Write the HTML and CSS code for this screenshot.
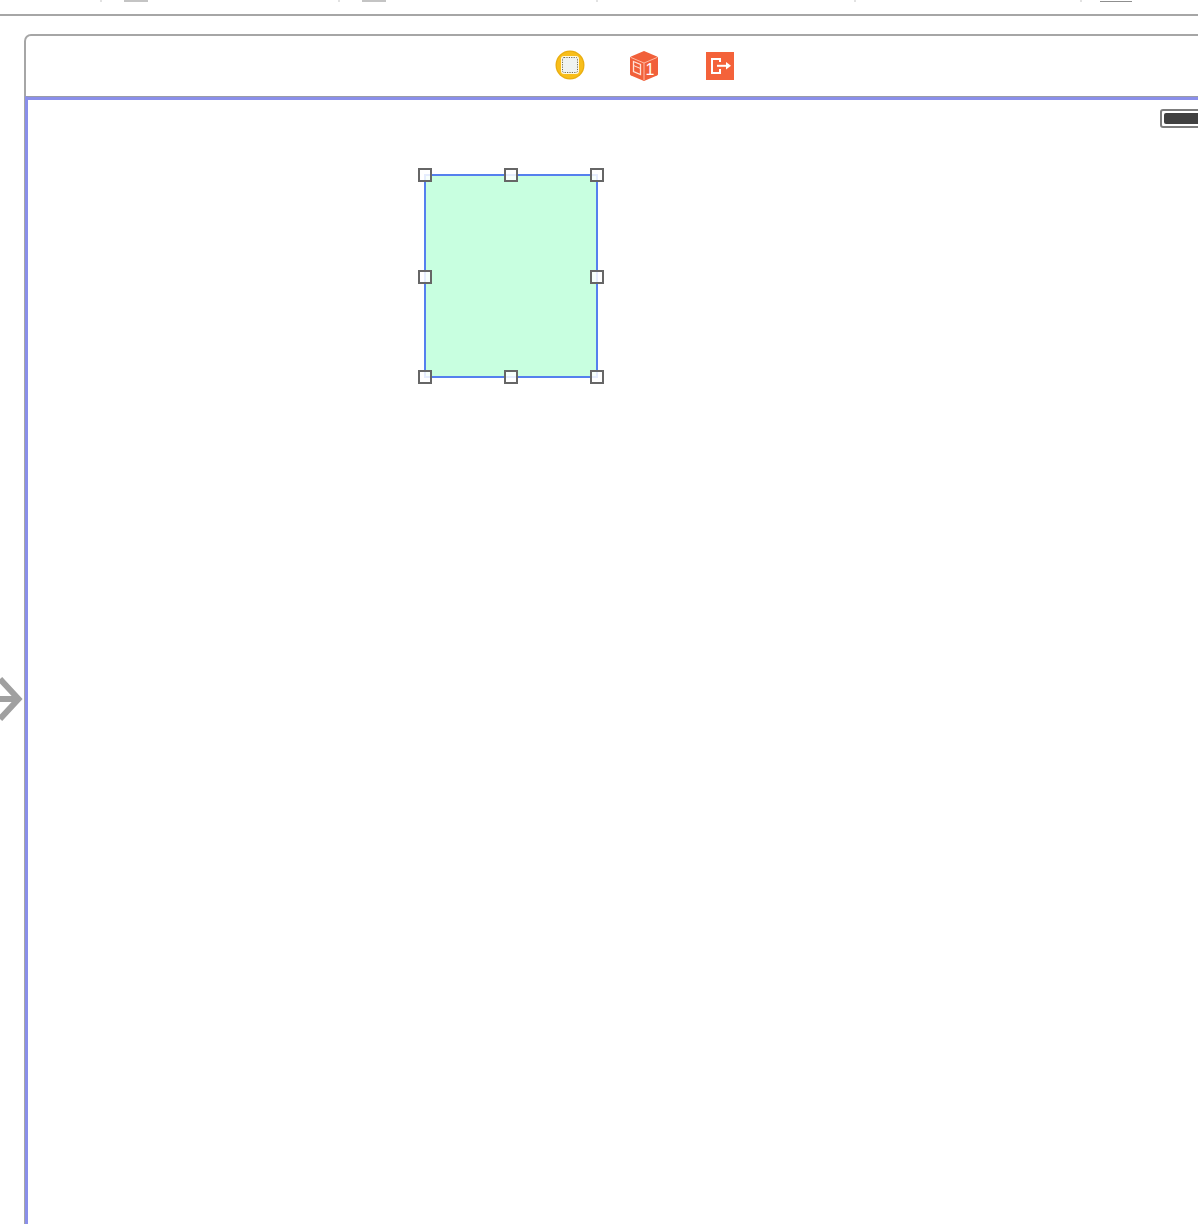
FILE: index.html
```html
<!DOCTYPE html>
<html lang="en">
<head>
<meta charset="utf-8">
<title>Storyboard scene</title>
<link rel="stylesheet" href="styles.css">
</head>
<body>
<div class="strip">
  <span class="tick tick-a"></span>
  <span class="tab tab-a"></span>
  <span class="tick tick-b"></span>
  <span class="tab tab-b"></span>
  <span class="tick tick-c"></span>
  <span class="tick tick-d"></span>
  <span class="tick tick-e"></span>
  <span class="tab tab-c"></span>
</div>
<svg class="entry-arrow" width="24" height="48" viewBox="0 0 24 48" aria-hidden="true">
  <path class="entry-stroke" d="M-4 24H17M0 4L18.500 24L0 44"/>
</svg>
<section class="scene">
  <header class="scene-dock">
    <svg class="dock-icon icon-vc" width="30" height="30" viewBox="0 0 30 30" aria-hidden="true">
      <circle cx="15" cy="15" r="14.5" fill="#eaae10"/>
      <circle cx="15" cy="15" r="13.2" fill="#f8be1a"/>
      <rect x="6" y="6" width="18" height="18" rx="3" fill="#fff8e0"/>
      <rect x="7.500" y="7.500" width="15" height="15" rx="1.500" fill="#eff3f1" stroke="#6f6a55" stroke-width="1" stroke-dasharray="1.200 1.200"/>
    </svg>
    <svg class="dock-icon icon-cube" width="28" height="30" viewBox="0 0 28 30" aria-hidden="true">
      <path d="M14 0L27 5.500Q28 6 28 7V23Q28 24 27 24.500L14 30L1 24.500Q0 24 0 23V7Q0 6 1 5.500Z" fill="#f1603a"/>
      <path d="M1 6.500L14 12L27 6.500M14 12V29" fill="none" stroke="#ffb9a2" stroke-width="1"/>
      <path d="M3.500 10.500L10.500 13.500V23.500L3.500 20.500Z" fill="none" stroke="#ffe3d8" stroke-width="1.300"/>
      <path d="M3.500 14.500L10.500 17.500" fill="none" stroke="#ffe3d8" stroke-width="1"/>
      <text class="cube-digit" x="20" y="24" text-anchor="middle">1</text>
    </svg>
    <svg class="dock-icon icon-exit" width="28" height="28" viewBox="0 0 28 28" aria-hidden="true">
      <rect width="28" height="28" fill="#f4623a"/>
      <path d="M14 10V7H6V21H14V17" fill="none" stroke="#fff" stroke-width="2"/>
      <path d="M11 13.800H21" fill="none" stroke="#fff" stroke-width="2"/>
      <path d="M20 10L25 13.800L20 17.600Z" fill="#fff"/>
    </svg>
  </header>
  <div class="scene-canvas">
    <div class="battery"><span class="battery-fill"></span></div>
    <div class="selected-view">
      <span class="handle h-tl"></span>
      <span class="handle h-tc"></span>
      <span class="handle h-tr"></span>
      <span class="handle h-ml"></span>
      <span class="handle h-mr"></span>
      <span class="handle h-bl"></span>
      <span class="handle h-bc"></span>
      <span class="handle h-br"></span>
    </div>
  </div>
</section>
</body>
</html>
```
FILE: styles.css
```css
html, body {
  margin: 0;
  padding: 0;
  width: 1198px;
  height: 1224px;
  overflow: hidden;
  background: #fff;
}

body {
  position: relative;
  font-family: "Liberation Sans", Arial, sans-serif;
}

.strip {
  position: relative;
  height: 14px;
  border-bottom: 2px solid #a6a6a6;
}

.tick {
  position: absolute;
  top: 0;
  width: 2px;
  height: 2px;
  background: #e2e2e2;
}
.tick-a { left: 100px; }
.tick-b { left: 338px; }
.tick-c { left: 596px; }
.tick-d { left: 854px; }
.tick-e { left: 1080px; }

.tab {
  position: absolute;
  top: 0;
  height: 2px;
  background: #c4c4c4;
}
.tab-a { left: 124px; width: 24px; }
.tab-b { left: 362px; width: 24px; }
.tab-c { left: 1100px; width: 32px; height: 1px; border-bottom: 1px solid #8f8f8f; background: #fff; }

.entry-arrow {
  position: absolute;
  left: 0;
  top: 675px;
}
.entry-stroke {
  fill: none;
  stroke: #a0a0a0;
  stroke-width: 6;
}

.scene {
  width: 1242px;
  margin: 18px 0 0 24px;
  height: 1300px;
  box-sizing: border-box;
  border: 2px solid #a6a6a6;
  border-bottom: 0;
  border-radius: 7px 7px 0 0;
  display: flex;
  flex-direction: column;
}

.scene-dock {
  height: 60px;
  flex: none;
  display: flex;
  align-items: center;
  padding-left: 529px;
  box-sizing: border-box;
}

.dock-icon {
  display: block;
  flex: none;
}
.icon-vc { margin-bottom: 2px; }
.icon-cube { margin-left: 45px; }
.icon-exit { margin-left: 48px; }

.cube-digit {
  font-family: "Liberation Sans", Arial, sans-serif;
  font-size: 16px;
  fill: #fff;
}

.scene-canvas {
  position: relative;
  flex: 1;
  margin-left: -1px;
  border-top: 1px solid #9a9ca8;
  border-left: 3px solid #8a8fea;
  box-shadow: inset 0 3px 0 0 #8a8fea;
  background: #fff;
}

.battery {
  position: absolute;
  left: 1132px;
  top: 12px;
  width: 60px;
  height: 19px;
  box-sizing: border-box;
  border: 2px solid #7d7d7d;
  border-radius: 3px;
  padding: 2px;
  background: #fff;
}
.battery-fill {
  display: block;
  height: 100%;
  background: #404040;
  border-radius: 2px;
}

.selected-view {
  position: absolute;
  left: 396px;
  top: 77px;
  width: 174px;
  height: 204px;
  box-sizing: border-box;
  border: 2px solid #5580ee;
  background: #c8ffe0;
}

.handle {
  position: absolute;
  width: 14px;
  height: 14px;
  box-sizing: border-box;
  border: 2px solid #666;
  background: rgba(255, 255, 255, 0.85);
}
.h-tl { left: -8px; top: -8px; }
.h-tc { left: 78px; top: -8px; }
.h-tr { left: 164px; top: -8px; }
.h-ml { left: -8px; top: 94px; }
.h-mr { left: 164px; top: 94px; }
.h-bl { left: -8px; top: 194px; }
.h-bc { left: 78px; top: 194px; }
.h-br { left: 164px; top: 194px; }
```
